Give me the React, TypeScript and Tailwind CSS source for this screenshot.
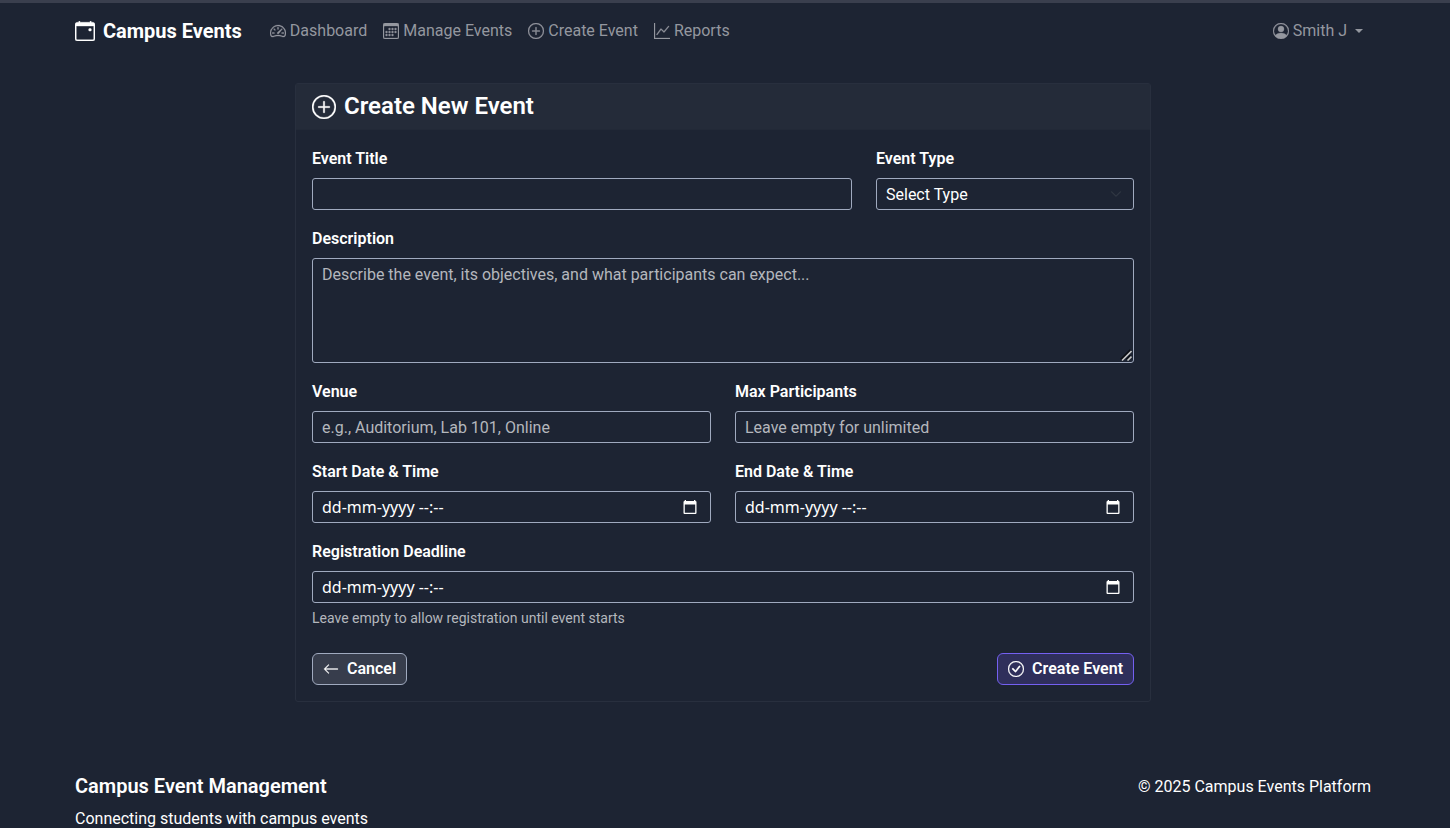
import { useRef, type ReactNode } from "react";
import type { IconType } from "react-icons";
import {
  BsArrowLeft,
  BsCalendar3,
  BsCalendarEvent,
  BsCheckCircle,
  BsChevronDown,
  BsGraphUp,
  BsPersonCircle,
  BsPlusCircle,
  BsSpeedometer2,
} from "react-icons/bs";

const control =
  "block w-full rounded-[3px] border border-[#a0aabf] bg-transparent px-[9px] text-base text-white outline-none focus:border-[#7460f1]";

const links: { label: string; icon: IconType }[] = [
  { label: "Dashboard", icon: BsSpeedometer2 },
  { label: "Manage Events", icon: BsCalendar3 },
  { label: "Create Event", icon: BsPlusCircle },
  { label: "Reports", icon: BsGraphUp },
];

function Field({
  id,
  label,
  className = "",
  children,
}: {
  id: string;
  label: string;
  className?: string;
  children: ReactNode;
}) {
  return (
    <div className={className}>
      <label htmlFor={id} className="mb-1.5 block w-fit text-base leading-[26px] font-semibold">
        {label}
      </label>
      {children}
    </div>
  );
}

function CalendarGlyph() {
  return (
    <svg width="14" height="16" viewBox="0 0 14 16" aria-hidden="true">
      <path
        fill="currentColor"
        d="M3 1v1h8V1h1.300v1H12.500A1 1 0 0 1 13.500 3v11a1 1 0 0 1-1 1h-11a1 1 0 0 1-1-1V3a1 1 0 0 1 1-1H1.700V1zM1.800 5.500v8.200h10.400V5.500z"
        fillRule="evenodd"
      />
    </svg>
  );
}

function ResizeGrip() {
  return (
    <svg
      width="12"
      height="12"
      viewBox="0 0 12 12"
      className="pointer-events-none absolute right-0.5 bottom-0.5"
      aria-hidden="true"
    >
      <path d="M0 0h12v12H0z" fill="#1d2433" />
      <path d="M1 10.500 10.500 1M6.500 10.500l4-4" stroke="#0b0e14" strokeWidth="2" />
      <path d="M2 11.500 11.500 2M7.500 11.500l4-4" stroke="#c4c4c4" strokeWidth="1.600" />
    </svg>
  );
}

function DateTimeInput({ id }: { id: string }) {
  const input = useRef<HTMLInputElement>(null);
  return (
    <div className="flex h-8 items-center rounded-[3px] border border-[#a0aabf] pr-[13px] pl-[9px] focus-within:border-[#7460f1]">
      <input
        ref={input}
        id={id}
        name={id}
        type="text"
        placeholder="dd-mm-yyyy --:--"
        className="h-full min-w-0 flex-1 bg-transparent font-['Noto_Sans',sans-serif] text-base text-white outline-none placeholder:text-white"
      />
      <button
        type="button"
        aria-label="Choose date and time"
        onClick={() => input.current?.focus()}
        className="text-white"
      >
        <CalendarGlyph />
      </button>
    </div>
  );
}

function Navbar() {
  return (
    <nav className="mx-auto flex h-14 max-w-[1296px] items-center">
      <a href="#home" className="mr-5 flex items-center gap-2 text-xl font-bold text-white">
        <BsCalendarEvent className="size-5 stroke-[0.3]" />
        Campus Events
      </a>
      <ul className="flex flex-1 items-center text-[#94979f]">
        {links.map(({ label, icon: Icon }) => (
          <li key={label}>
            <a href="#nav" className="flex items-center gap-1 px-2">
              <Icon className="size-4 stroke-[0.3]" />
              {label}
            </a>
          </li>
        ))}
      </ul>
      <button type="button" className="flex items-center gap-1 px-2 text-[#94979f]">
        <BsPersonCircle className="size-4 stroke-[0.3]" />
        Smith J
        <svg width="8" height="4" viewBox="0 0 8 4" className="ml-1" aria-hidden="true">
          <path d="M0 0h8L4 4z" fill="currentColor" />
        </svg>
      </button>
    </nav>
  );
}

function EventForm() {
  return (
    <section className="mx-auto max-w-[856px] rounded-[3px] border border-[#282f3e]">
      <header className="border-b border-[#222937] bg-[#242b39] px-4 py-2">
        <h1 className="flex items-center gap-2 text-2xl leading-[29px] font-semibold">
          <BsPlusCircle className="size-6 stroke-[0.2]" />
          Create New Event
        </h1>
      </header>
      <form className="p-4" onSubmit={(e) => e.preventDefault()}>
        <div className="grid grid-cols-12 gap-x-6 gap-y-4">
          <Field id="title" label="Event Title" className="col-span-8">
            <input id="title" name="title" type="text" className={`${control} h-8`} />
          </Field>
          <Field id="type" label="Event Type" className="col-span-4">
            <div className="relative">
              <select
                id="type"
                name="type"
                defaultValue=""
                className={`${control} h-8 appearance-none pt-0.5`}
              >
                <option value="">Select Type</option>
              </select>
              <BsChevronDown className="pointer-events-none absolute top-[10px] right-3 size-3 stroke-[0.5] text-[#343a46]" />
            </div>
          </Field>
          <Field id="description" label="Description" className="col-span-12">
            <div className="relative">
              <textarea
                id="description"
                name="description"
                rows={4}
                placeholder="Describe the event, its objectives, and what participants can expect..."
                className={`${control} h-[105px] resize-y py-1 leading-6 scheme-dark placeholder:text-[#b4b7bd]`}
              />
              <ResizeGrip />
            </div>
          </Field>
          <Field id="venue" label="Venue" className="col-span-6">
            <input
              id="venue"
              name="venue"
              type="text"
              placeholder="e.g., Auditorium, Lab 101, Online"
              className={`${control} h-8 placeholder:text-[#b4b7bd]`}
            />
          </Field>
          <Field id="max" label="Max Participants" className="col-span-6">
            <input
              id="max"
              name="max"
              type="text"
              inputMode="numeric"
              placeholder="Leave empty for unlimited"
              className={`${control} h-8 placeholder:text-[#b4b7bd]`}
            />
          </Field>
          <Field id="start" label="Start Date & Time" className="col-span-6">
            <DateTimeInput id="start" />
          </Field>
          <Field id="end" label="End Date & Time" className="col-span-6">
            <DateTimeInput id="end" />
          </Field>
          <Field id="deadline" label="Registration Deadline" className="col-span-12">
            <DateTimeInput id="deadline" />
            <p className="mt-1 text-sm leading-[22px] text-[#b4b7bd]">
              Leave empty to allow registration until event starts
            </p>
          </Field>
        </div>
        <div className="mt-6 flex items-center justify-between">
          <button
            type="button"
            className="flex h-8 items-center gap-2 rounded-md border border-[#a0aabf] bg-[#373d4c] px-2.5 font-semibold"
          >
            <BsArrowLeft className="size-4 stroke-[0.3]" />
            Cancel
          </button>
          <button
            type="submit"
            className="flex h-8 items-center gap-2 rounded-md border border-[#7460f1] bg-[#2f2f5b] px-2.5 font-semibold"
          >
            <BsCheckCircle className="size-4 stroke-[0.3]" />
            Create Event
          </button>
        </div>
      </form>
    </section>
  );
}

export default function App() {
  return (
    <div className="min-h-screen border-t-[3px] border-[#3a3f4e] bg-[#1d2433] pr-1 font-['Roboto',sans-serif] text-base text-white">
      <Navbar />
      <main className="px-3 pt-6">
        <EventForm />
      </main>
      <footer className="mx-auto mt-[73px] flex max-w-[1296px] items-start justify-between">
        <div>
          <h2 className="mb-2.5 text-xl leading-[22px] font-semibold">Campus Event Management</h2>
          <p>Connecting students with campus events</p>
        </div>
        <p>© 2025 Campus Events Platform</p>
      </footer>
    </div>
  );
}
